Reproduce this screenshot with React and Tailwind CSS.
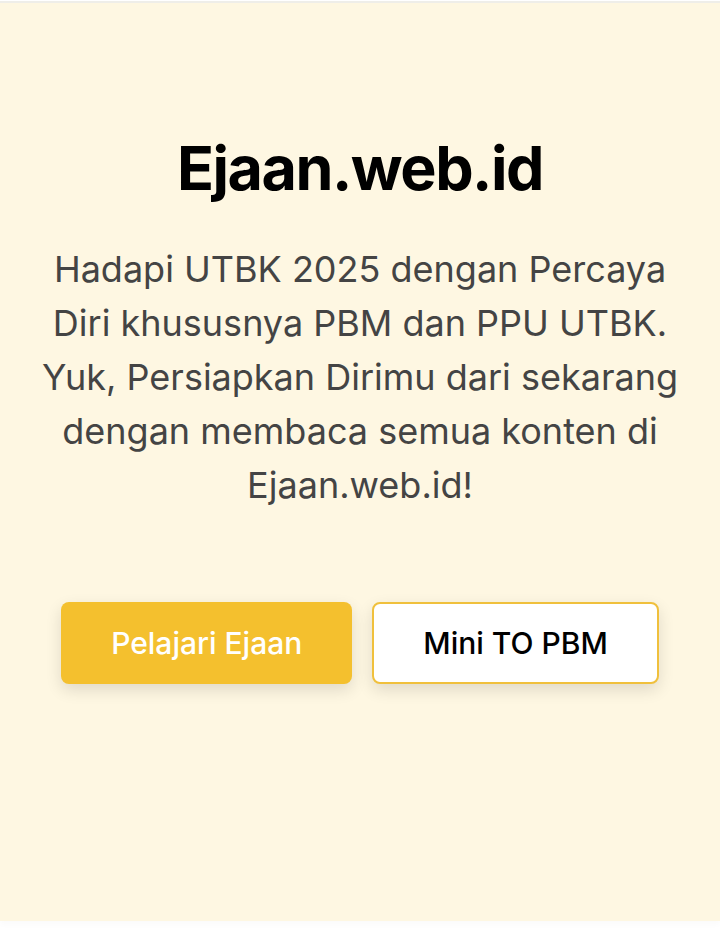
import React from "react";

export default function App() {
  return (
    <div className="w-[720px] h-[939px] bg-white" style={{ fontFamily: "Inter, 'Noto Sans', sans-serif" }}>
      <div className="h-[1px] bg-white" />
      <div className="h-[2px] bg-[#efeee9]" />
      <section className="h-[918px] bg-[#fef7e2] px-10 pt-[129px] flex flex-col items-center shadow-[0_4px_6px_rgba(0,0,0,0.02)]">
        <h1 className="text-[61px] leading-[72px] font-bold tracking-[-1.5px] text-black text-center">Ejaan.web.id</h1>
        <p className="mt-[38px] text-[36px] leading-[54px] text-[#444444] text-center">
          Hadapi UTBK 2025 dengan Percaya Diri khususnya PBM dan PPU UTBK. Yuk, Persiapkan Dirimu dari sekarang dengan membaca semua konten di Ejaan.web.id!
        </p>
        <div className="mt-[90px] flex gap-5">
          <button className="h-[82px] px-[50px] rounded-lg bg-[#f4c02e] text-white text-[30px] font-medium shadow-[0_6px_16px_rgba(0,0,0,0.12)]">
            Pelajari Ejaan
          </button>
          <button className="h-[82px] px-[49px] rounded-lg bg-white border-2 border-[#f0c03c] text-black text-[30px] font-medium shadow-[0_6px_16px_rgba(0,0,0,0.12)]">
            Mini TO PBM
          </button>
        </div>
      </section>
    </div>
  );
}
